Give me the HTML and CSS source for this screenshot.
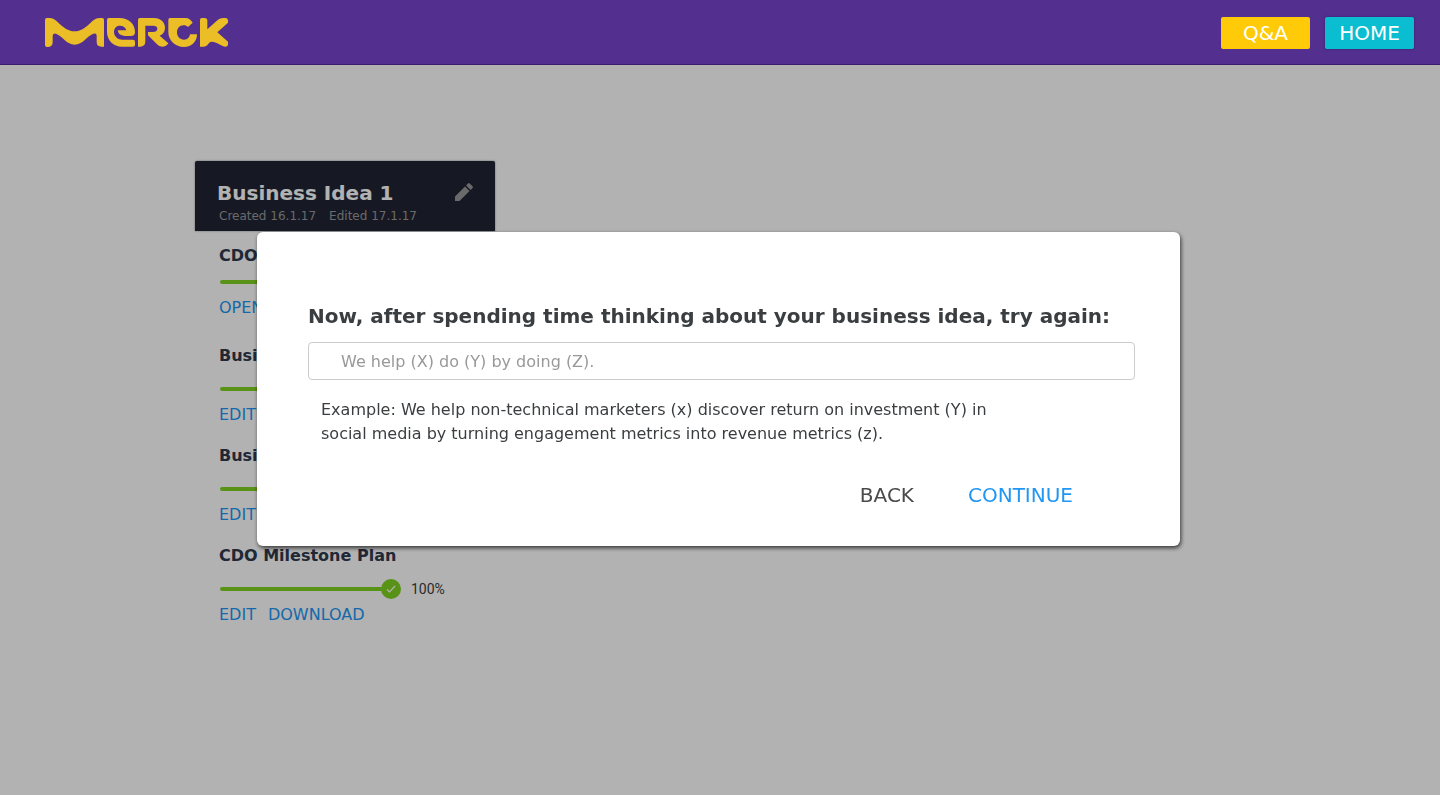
FILE: index.html
```html
<!DOCTYPE html>
<html lang="en">
<head>
<meta charset="utf-8">
<meta name="viewport" content="width=device-width, initial-scale=1">
<title>Merck – Business Idea 1</title>
<link rel="stylesheet" href="styles.css">
</head>
<body>
<header class="topbar">
  <a class="logo" href="#" aria-label="Merck">
    <svg width="183" height="29" viewBox="45 54 549 87" fill="#ebbd27" aria-hidden="true">
      <path d="M50 54H60C82 54 98 94 134 94C170 94 184 54 208 54H217Q222 54 222 60V140H214Q200 140 200 126V107Q200 98 190 101C170 108 158 134 134 134C110 134 98 108 78 101Q68 98 68 108V127Q68 141 53 141Q45 141 45 134V60Q45 54 50 54Z"/>
      <path d="M236 54H269C298 54 315 74 315 96Q315 108 303 108H284Q264 106 263 91H289C287 82 280 77 269 77C259 77 252 85 252 95C252 109 263 119 278 119H309Q315 119 315 126V134Q315 140 309 140H276C250 140 231 121 231 96V60Q231 54 236 54Z"/>
      <path d="M329 54H372C392 54 405 67 405 83C405 95 399 103 389 107L415 130C409 138 404 140 397 140C388 140 384 136 378 130L354 106V96H368C377 96 382 92 382 86C382 80 377 77 370 77H346V124Q346 140 330 140H324V60Q324 54 329 54Z"/>
      <path d="M420 54H467C476 54 482 60 488 68L474 81C470 78 467 76 461 76C448 76 441 86 441 97C441 110 450 119 462 119C473 119 479 112 480 103H501C501 124 486 141 462 141C436 141 415 122 415 96V60Q415 54 420 54Z"/>
      <path d="M515 54H524Q532 54 532 62V88L563 60Q570 54 579 54H586Q594 54 594 62V68L562 97L594 125V132Q594 140 586 140C575 140 565 126 544 125C536 125 534 140 520 140H510V60Q510 54 515 54Z"/>
    </svg>
  </a>
  <nav class="topnav">
    <a class="navbtn navbtn-qa" href="#">Q&amp;A</a>
    <a class="navbtn navbtn-home" href="#">HOME</a>
  </nav>
</header>

<main class="page">
  <article class="idea">
    <header class="idea-head">
      <div class="idea-titles">
        <h1 class="idea-title">Business Idea 1</h1>
        <p class="idea-meta"><span>Created 16.1.17</span><span>Edited 17.1.17</span></p>
      </div>
      <button class="icon-btn" type="button" aria-label="Edit idea">
        <svg width="18" height="18" viewBox="3 3 18 18" fill="#999" aria-hidden="true"><path d="M3 16.500V21h4.500L17.500 11l-4.500-4.500L3 16.500zM20.500 8a1.200 1.200 0 0 0 0-1.700l-2.800-2.800a1.200 1.200 0 0 0-1.700 0l-1.900 1.900 4.500 4.500 1.900-1.900z"/></svg>
      </button>
    </header>
    <section class="step step-first">
      <h2 class="step-title">CDO Profile</h2>
      <div class="progress"><span class="bar"></span></div>
      <div class="actions"><a href="#">OPEN</a></div>
    </section>
    <section class="step">
      <h2 class="step-title">Business Model</h2>
      <div class="progress"><span class="bar"></span></div>
      <div class="actions"><a href="#">EDIT</a></div>
    </section>
    <section class="step">
      <h2 class="step-title">Business Plan</h2>
      <div class="progress"><span class="bar"></span></div>
      <div class="actions"><a href="#">EDIT</a></div>
    </section>
    <section class="step">
      <h2 class="step-title">CDO Milestone Plan</h2>
      <div class="progress">
        <span class="bar"></span>
        <svg class="tick" width="20" height="20" viewBox="0 0 20 20" aria-hidden="true"><circle cx="10" cy="10" r="10" fill="#7ed321"/><path d="M6 10.500L8.500 13L14 7" fill="none" stroke="#fff" stroke-width="1.200"/></svg>
        <span class="percent">100%</span>
      </div>
      <div class="actions"><a href="#">EDIT</a><a href="#">DOWNLOAD</a></div>
    </section>
  </article>
</main>

<div class="overlay">
  <form class="dialog" role="dialog" aria-modal="true" aria-labelledby="statement-label">
    <label class="dialog-title" id="statement-label" for="statement">Now, after spending time thinking about your business idea, try again:</label>
    <input class="field" id="statement" type="text" placeholder="We help (X) do (Y) by doing (Z).">
    <p class="example">Example: We help non-technical marketers (x) discover return on investment (Y) in social media by turning engagement metrics into revenue metrics (z).</p>
    <div class="dialog-actions">
      <button class="btn" type="button">BACK</button>
      <button class="btn btn-primary" type="submit">CONTINUE</button>
    </div>
  </form>
</div>
</body>
</html>
```
FILE: styles.css
```css
* { box-sizing: border-box; }

body {
  margin: 0;
  min-height: 100vh;
  background: #fff;
  color: #3b3e40;
  font-family: Verdana, "DejaVu Sans", sans-serif;
  font-size: 16px;
}

h1, h2, p { margin: 0; }
a { text-decoration: none; }
button, input { font: inherit; }

.topbar {
  position: relative;
  z-index: 2;
  display: flex;
  align-items: center;
  justify-content: space-between;
  height: 65px;
  padding: 1px 26px 0 45px;
  background: #532f90;
  border-bottom: 1px solid #3a1d6e;
}

.logo svg { display: block; }

.topnav {
  display: flex;
  gap: 15px;
  padding-top: 1px;
}

.navbtn {
  width: 89px;
  height: 32px;
  border-radius: 2px;
  color: #fff;
  font-size: 20px;
  line-height: 32px;
  text-align: center;
}
.navbtn-qa { background: #ffcb08; }
.navbtn-home { background: #0bbdd0; box-shadow: 0 0 3px rgba(0, 0, 0, 0.3); }

.page { padding: 96px 24px 96px 195px; }

.idea { width: 300px; }

.idea-head {
  display: flex;
  align-items: flex-start;
  justify-content: space-between;
  height: 70px;
  padding: 20px 22px 0;
  border-radius: 2px 2px 0 0;
  background: #202434;
  box-shadow: 0 0 2px rgba(0, 0, 0, 0.5);
}

.idea-title {
  color: #fff;
  font-size: 20px;
  line-height: 24px;
}

.idea-meta {
  display: flex;
  gap: 13px;
  padding-left: 2px;
  color: #999;
  font-size: 12px;
  line-height: 22px;
}

.icon-btn {
  padding: 2px 0;
  border: 0;
  background: none;
}
.icon-btn svg { display: block; }

.step { padding: 13px 24px 6px; }
.step-first { padding: 13px 24px; }

.step-title {
  color: #2e384d;
  font-size: 16px;
  line-height: 24px;
}

.progress {
  display: flex;
  align-items: center;
  height: 20px;
  margin: 11px 0 6px 1px;
}
.step-first .progress { margin-top: 4px; }

.bar {
  width: 163px;
  height: 4px;
  border-radius: 2px;
  background: #7ed321;
}

.tick { margin-left: -2px; }

.percent {
  margin-left: 10px;
  font-family: Roboto, sans-serif;
  font-size: 14px;
}

.actions {
  display: flex;
  gap: 12px;
  line-height: 20px;
}
.actions a { color: #2196f3; }

.overlay {
  position: fixed;
  inset: 0;
  z-index: 1;
  display: flex;
  align-items: flex-start;
  justify-content: center;
  padding: 232px 27px 24px 24px;
  background: rgba(0, 0, 0, 0.3);
}

.dialog {
  display: flex;
  flex-direction: column;
  width: 100%;
  max-width: 923px;
  padding: 70px 45px 35px 51px;
  border-radius: 6px;
  background: #fff;
  box-shadow: 1px 2px 4px rgba(0, 0, 0, 0.7);
}

.dialog-title {
  font-size: 20px;
  font-weight: bold;
  line-height: 28px;
}

.field {
  height: 38px;
  margin-top: 12px;
  padding: 0 32px;
  border: 1px solid #ccc;
  border-radius: 4px;
  background: #fff;
  color: #3b3e40;
}
.field::placeholder { color: #999; opacity: 1; }

.example {
  max-width: 720px;
  margin-top: 18px;
  padding-left: 13px;
  line-height: 24px;
}

.dialog-actions {
  display: flex;
  justify-content: flex-end;
  gap: 54px;
  margin-top: 33px;
  padding-right: 62px;
}

.btn {
  padding: 0;
  border: 0;
  background: none;
  color: #4a4a4a;
  font-size: 20px;
  line-height: 32px;
}
.btn-primary { color: #2196f3; }
```
